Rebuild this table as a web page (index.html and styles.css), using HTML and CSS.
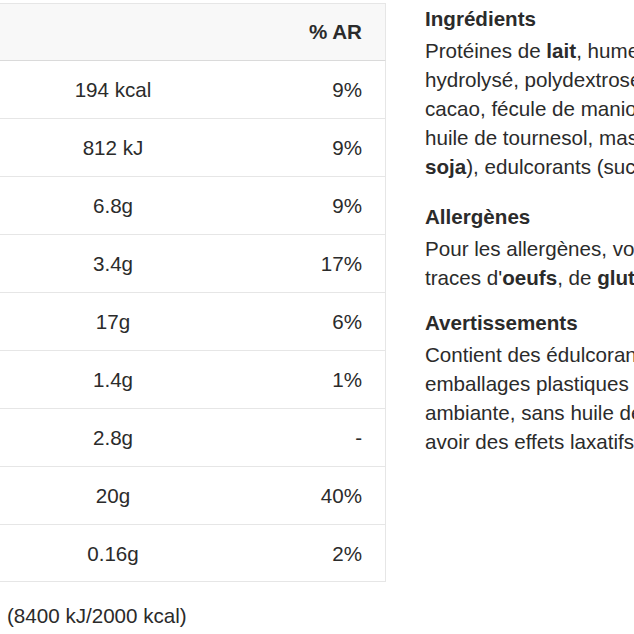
FILE: index.html
```
<!DOCTYPE html>
<html lang="fr">
<head>
<meta charset="utf-8">
<title>Valeurs nutritionnelles</title>
<link rel="stylesheet" href="styles.css">
</head>
<body>
<div class="page">
  <div class="nutrition">
    <table class="nutri-table">
      <thead>
        <tr><th class="col-val"></th><th class="col-ar">% AR</th></tr>
      </thead>
      <tbody>
        <tr><td class="col-val">194 kcal</td><td class="col-ar">9%</td></tr>
        <tr><td class="col-val">812 kJ</td><td class="col-ar">9%</td></tr>
        <tr><td class="col-val">6.8g</td><td class="col-ar">9%</td></tr>
        <tr><td class="col-val">3.4g</td><td class="col-ar">17%</td></tr>
        <tr><td class="col-val">17g</td><td class="col-ar">6%</td></tr>
        <tr><td class="col-val">1.4g</td><td class="col-ar">1%</td></tr>
        <tr><td class="col-val">2.8g</td><td class="col-ar">-</td></tr>
        <tr><td class="col-val">20g</td><td class="col-ar">40%</td></tr>
        <tr><td class="col-val">0.16g</td><td class="col-ar">2%</td></tr>
      </tbody>
    </table>
    <p class="footnote">(8400 kJ/2000 kcal)</p>
  </div>
  <div class="details">
    <section class="block block-ingredients">
      <h3 class="block-title">Ingrédients</h3>
      <p class="block-text">Protéines de <b>lait</b>, humectant (glycérol), collagène<br>hydrolysé, polydextrose, sirop de glucose, poudre de<br>cacao, fécule de manioc, arômes, émulsifiant (lécithines),<br>huile de tournesol, masse de cacao, lécithine de<br><b>soja</b>), edulcorants (sucralose, acésulfame K).</p>
    </section>
    <section class="block block-allergens">
      <h3 class="block-title">Allergènes</h3>
      <p class="block-text">Pour les allergènes, voir les ingrédients en gras. Peut contenir des<br>traces d'<b>oeufs</b>, de <b>gluten</b> et de <b>fruits à coque</b>.</p>
    </section>
    <section class="block">
      <h3 class="block-title">Avertissements</h3>
      <p class="block-text">Contient des édulcorants. Ne pas stocker dans des<br>emballages plastiques ouverts. Conserver à température<br>ambiante, sans huile de palme. Une consommation excessive peut<br>avoir des effets laxatifs.</p>
    </section>
  </div>
</div>
</body>
</html>
```
FILE: styles.css
```
html, body {
  margin: 0;
  padding: 0;
  background: #fff;
  overflow: hidden;
}

body {
  font-family: "Liberation Sans", Arial, Helvetica, sans-serif;
  font-size: 20.6px;
  line-height: 29px;
  color: #2b2b2b;
}

.page {
  display: flex;
  align-items: flex-start;
  padding-top: 3px;
  width: 1200px;
}

.nutrition {
  flex: none;
  width: 386px;
}

.nutri-table {
  width: 386px;
  border-collapse: separate;
  border-spacing: 0;
}

.nutri-table th,
.nutri-table td {
  padding: 14px 0;
  border-bottom: 1px solid #e6e6e6;
  font-weight: normal;
}

.nutri-table tbody tr:last-child td {
  padding-bottom: 13px;
}

.nutri-table thead th {
  background: #f8f8f8;
  border-top: 1px solid #e6e6e6;
  border-bottom-color: #dadada;
  font-weight: bold;
  padding: 13px 0 14px;
}

.col-val {
  width: 226px;
  text-align: center;
}

.nutri-table .col-ar {
  text-align: right;
  padding-right: 23px;
  border-right: 1px solid #e6e6e6;
}

.footnote {
  margin: 19px 0 0;
  padding-left: 7px;
}

.details {
  flex: none;
  margin-left: 39px;
  padding-top: 1px;
  white-space: nowrap;
}

.block {
  margin: 0;
}

.block-ingredients {
  margin-bottom: 21px;
}

.block-allergens {
  margin-bottom: 16px;
}

.block-title {
  margin: 0 0 3px;
  font-size: 20.6px;
  line-height: 29px;
  font-weight: bold;
}

.block-text {
  margin: 0;
}

.block-text b {
  font-weight: bold;
}
```
